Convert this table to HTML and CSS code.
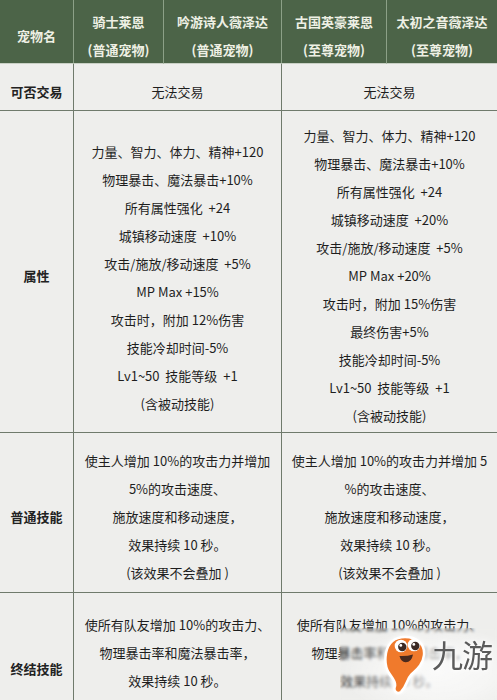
FILE: index.html
```html
<!DOCTYPE html>
<html lang="zh-CN">
<head>
<meta charset="utf-8">
<title>宠物对比</title>
<link rel="stylesheet" href="styles.css">
</head>
<body>
<div class="sheet">
  <div class="grid">
    <div class="hd first">宠物名</div>
    <div class="hd"><span>骑士莱恩</span><span>(普通宠物)</span></div>
    <div class="hd"><span>吟游诗人薇泽达</span><span>(普通宠物)</span></div>
    <div class="hd"><span>古国英豪莱恩</span><span>(至尊宠物)</span></div>
    <div class="hd last"><span>太初之音薇泽达</span><span>(至尊宠物)</span></div>

    <div class="cell label">可否交易</div>
    <div class="cell wide">无法交易</div>
    <div class="cell wide last">无法交易</div>

    <div class="cell label">属性</div>
    <div class="cell wide attr-left">
      <span>力量、智力、体力、精神+120</span>
      <span>物理暴击、魔法暴击+10%</span>
      <span>所有属性强化&nbsp; +24</span>
      <span>城镇移动速度&nbsp; +10%</span>
      <span>攻击/施放/移动速度&nbsp; +5%</span>
      <span>MP Max +15%</span>
      <span>攻击时，附加 12%伤害</span>
      <span>技能冷却时间-5%</span>
      <span>Lv1~50&nbsp; 技能等级&nbsp; +1</span>
      <span>(含被动技能)</span>
    </div>
    <div class="cell wide last">
      <span>力量、智力、体力、精神+120</span>
      <span>物理暴击、魔法暴击+10%</span>
      <span>所有属性强化&nbsp; +24</span>
      <span>城镇移动速度&nbsp; +20%</span>
      <span>攻击/施放/移动速度&nbsp; +5%</span>
      <span>MP Max +20%</span>
      <span>攻击时，附加 15%伤害</span>
      <span>最终伤害+5%</span>
      <span>技能冷却时间-5%</span>
      <span>Lv1~50&nbsp; 技能等级&nbsp; +1</span>
      <span>(含被动技能)</span>
    </div>

    <div class="cell label">普通技能</div>
    <div class="cell wide">
      <span>使主人增加 10%的攻击力并增加</span>
      <span>5%的攻击速度、</span>
      <span>施放速度和移动速度，</span>
      <span>效果持续 10 秒。</span>
      <span>(该效果不会叠加 )</span>
    </div>
    <div class="cell wide last">
      <span>使主人增加 10%的攻击力并增加 5</span>
      <span>%的攻击速度、</span>
      <span>施放速度和移动速度，</span>
      <span>效果持续 10 秒。</span>
      <span>(该效果不会叠加 )</span>
    </div>

    <div class="cell label">终结技能</div>
    <div class="cell wide top">
      <span>使所有队友增加 10%的攻击力、</span>
      <span>物理暴击率和魔法暴击率，</span>
      <span>效果持续 10 秒。</span>
    </div>
    <div class="cell wide last top">
      <span>使所有队友增加 10%的攻击力、</span>
      <span>物理暴击率和魔法暴击率，</span>
      <span>效果持续 10 秒。</span>
    </div>
  </div>

  <div class="watermark">
    <svg class="mascot" viewBox="0 0 44 62" width="44" height="62" aria-hidden="true">
      <path d="M22 3 C34 3 42 10 41 21 C40 31 33 36 28 41 C24 45 24 52 18 58 C14 61 10 57 12 52 C13 47 9 44 6 39 C2 33 2 25 3 19 C5 9 12 3 22 3 Z" fill="#f07a2c" stroke="#ffffff" stroke-width="2.5" stroke-linejoin="round"/>
      <circle cx="18" cy="12" r="6.3" fill="#ffffff"/>
      <circle cx="31" cy="11" r="6.3" fill="#ffffff"/>
      <circle cx="19.3" cy="13" r="4.2" fill="#3b2a26"/>
      <circle cx="32.3" cy="12" r="4.2" fill="#3b2a26"/>
      <circle cx="17.8" cy="11.4" r="1.4" fill="#ffffff"/>
      <circle cx="30.8" cy="10.4" r="1.4" fill="#ffffff"/>
      <path d="M16.5 22 Q23.5 22.5 30 20.5 Q28.5 28.5 22.5 28.3 Q18 28 16.5 22 Z" fill="#4a2a1e"/>
    </svg>
    <span class="brand">九游</span>
  </div>
</div>
</body>
</html>
```
FILE: styles.css
```css
html, body {
  margin: 0;
  padding: 0;
  background: #eeeeec;
}

body {
  font-family: "Noto Sans CJK SC", "Microsoft YaHei", sans-serif;
  font-size: 13px;
  color: #1e1e1e;
  overflow: hidden;
}

.sheet {
  position: relative;
  width: 497px;
}

.grid {
  display: grid;
  grid-template-columns: 74px 90px 118px 105px 110px;
  grid-template-rows: 64px 47px 322px 160px 143px;
}

.hd {
  box-sizing: border-box;
  background: #4c6448;
  color: #eef0e4;
  font-weight: bold;
  border-right: 1px solid #8ca087;
  border-bottom: 1px solid #c9d0c5;
  display: flex;
  flex-direction: column;
  align-items: center;
  justify-content: center;
  padding-top: 8px;
  line-height: 28px;
  text-align: center;
  white-space: nowrap;
}

.hd.last {
  border-right: none;
}

.cell {
  box-sizing: border-box;
  background: #eeeeec;
  border-right: 1px solid #6f7a6c;
  border-bottom: 1px solid #6f7a6c;
  display: flex;
  flex-direction: column;
  align-items: center;
  justify-content: center;
  padding-top: 9px;
  line-height: 28px;
  text-align: center;
  white-space: nowrap;
}

.cell.last {
  border-right: none;
}

.cell.wide {
  grid-column: span 2;
}

.cell.top {
  justify-content: flex-start;
  padding-top: 18px;
}

.label {
  font-weight: bold;
  color: #222;
}

.attr-left {
  padding-top: 13px;
}

.watermark {
  position: absolute;
  left: 340px;
  top: 628px;
  width: 157px;
  height: 80px;
  backdrop-filter: blur(1.5px);
  -webkit-backdrop-filter: blur(1.5px);
  background: radial-gradient(ellipse 62% 58% at 62% 55%, rgba(255,255,255,0.7) 0%, rgba(255,255,255,0.45) 55%, rgba(255,255,255,0) 100%);
}

.mascot {
  position: absolute;
  left: 43px;
  top: 6px;
  filter: drop-shadow(0 0 2px rgba(255,255,255,0.9));
}

.brand {
  position: absolute;
  left: 92px;
  top: 6px;
  font-family: "Noto Sans CJK SC", sans-serif;
  font-size: 31px;
  font-weight: 400;
  line-height: 40px;
  color: #5b5b5b;
  letter-spacing: -1px;
  text-shadow: 0 0 3px #fff, 0 0 6px #fff;
}
```
